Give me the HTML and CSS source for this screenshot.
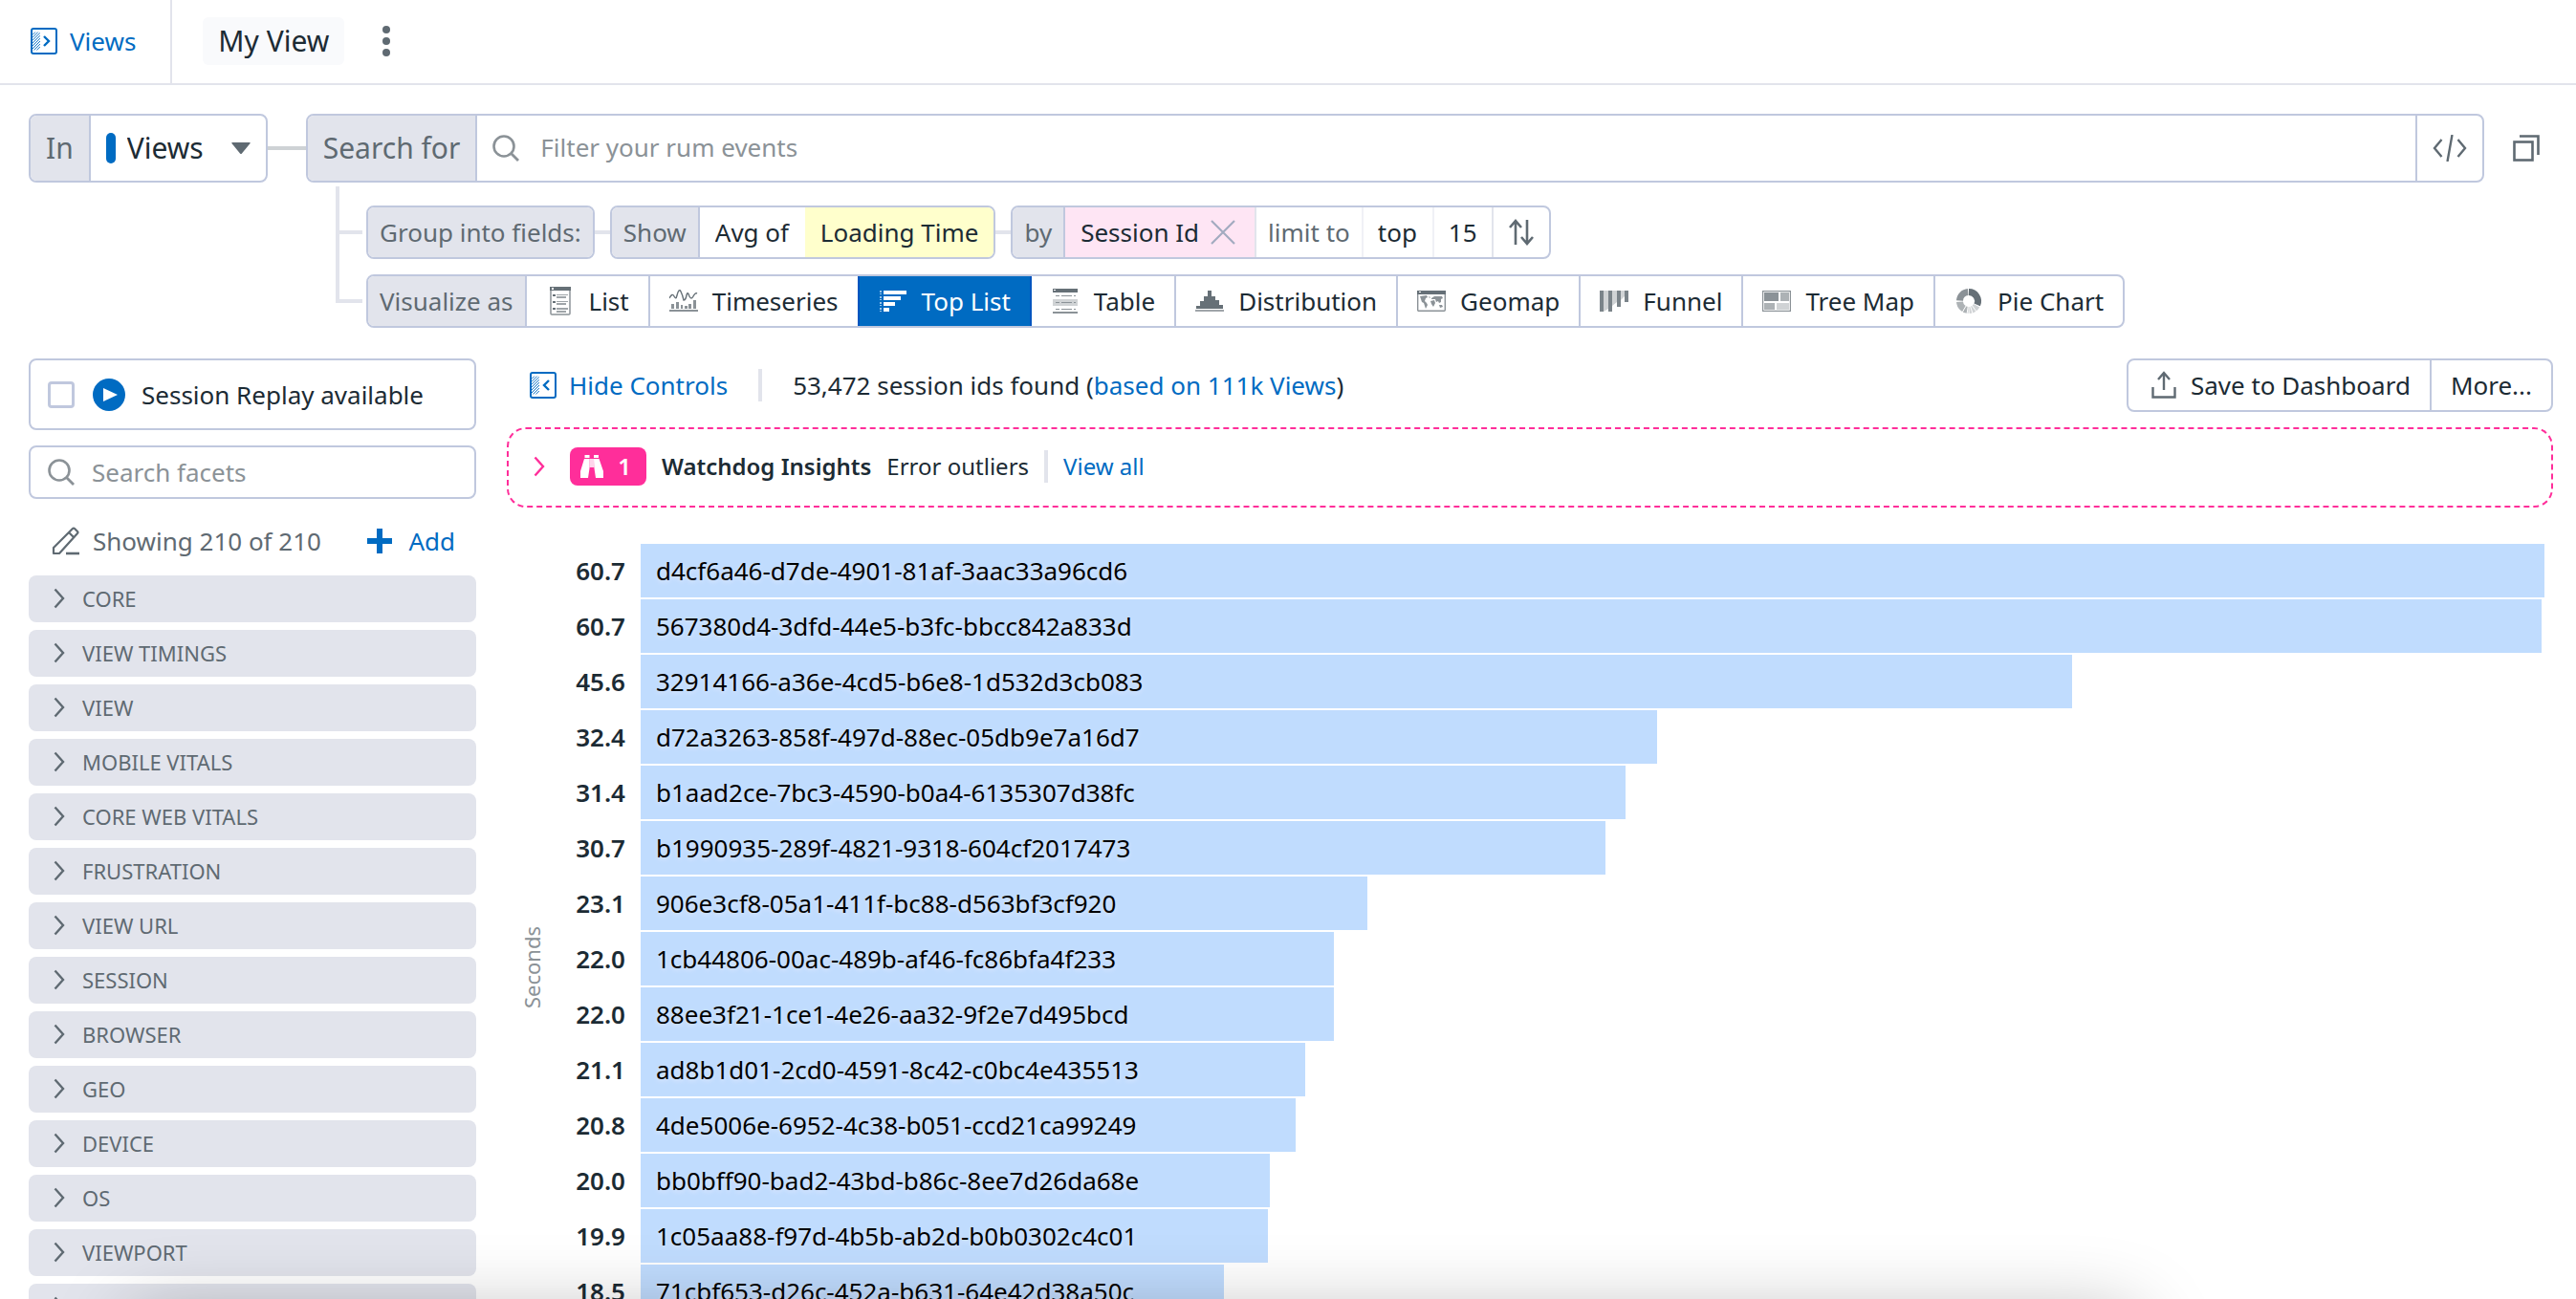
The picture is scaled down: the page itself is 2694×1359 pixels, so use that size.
FILE: index.html
```html
<!DOCTYPE html>
<html lang="en">
<head>
<meta charset="utf-8">
<meta name="viewport" content="width=device-width, initial-scale=1">
<title>My View</title>
<link rel="stylesheet" href="styles.css">
</head>
<body>
<svg class="defs" aria-hidden="true">
  <symbol id="hatch" viewBox="0 0 11 26"><path d="M0 4 4 0M0 8 8 0M0 12 11 1M0 16 11 5M0 20 11 9M0 24 11 13M2 26 11 17M6 26 11 21" fill="none" stroke="currentColor" stroke-width="1.3"/></symbol>
  <symbol id="search" viewBox="0 0 28 28"><circle cx="12" cy="12" r="10.5" fill="none" stroke="currentColor" stroke-width="2.6"/><path d="m19.5 19.5 7.5 7.5" stroke="currentColor" stroke-width="2.8"/></symbol>
  <symbol id="chevron" viewBox="0 0 12 22"><path d="m1.5 1.5 8.5 9.5-8.5 9.5" fill="none" stroke="currentColor" stroke-width="2.4"/></symbol>
</svg>

<header class="topbar">
  <a class="views-link" href="#">
    <svg class="icon-28" viewBox="0 0 28 28"><rect x="1" y="1" width="26" height="26" rx="2" fill="none" stroke="currentColor" stroke-width="2"/><use href="#hatch" x="2" y="1" width="8" height="26"/><path d="m14 9 5 5-5 5" fill="none" stroke="currentColor" stroke-width="2.4"/></svg>
    Views
  </a>
  <h1 class="view-name">My View</h1>
  <button class="kebab" type="button" aria-label="View options">
    <svg width="8" height="32" viewBox="0 0 8 32"><circle cx="4" cy="4" r="4"/><circle cx="4" cy="16" r="4"/><circle cx="4" cy="28" r="4"/></svg>
  </button>
</header>

<section class="query">
  <div class="query-row">
    <div class="box box-large source">
      <label class="tag" for="source">In</label>
      <span class="source-mark"></span>
      <select id="source" class="pick source-pick"><option>Views</option></select>
      <svg class="caret" width="20" height="12" viewBox="0 0 20 12"><path d="M1 0h18q1 0 .6 1L11 11.4q-1 1-2 0L.4 1Q0 0 1 0z"/></svg>
    </div>
    <span class="link-line"></span>
    <div class="box box-large search-box">
      <label class="tag" for="filter">Search for</label>
      <svg class="icon-28 search-icon"><use href="#search"/></svg>
      <input id="filter" class="text-input" type="text" placeholder="Filter your rum events">
      <button class="code-button" type="button" aria-label="Edit as code">
        <svg width="36" height="28" viewBox="0 0 36 28" fill="none" stroke="currentColor" stroke-width="2.4"><path d="M9.500 5 2 14l7.500 9M26.500 5 34 14l-7.500 9M20.500 0l-5 28"/></svg>
      </button>
    </div>
    <button class="copy-button" type="button" aria-label="Copy query">
      <svg class="icon-28" viewBox="0 0 28 28" fill="none" stroke="currentColor" stroke-width="2.6"><rect x="1.500" y="7.500" width="19" height="19"/><path d="M7 1.500h19.500V21"/></svg>
    </button>
  </div>

  <ul class="tree">
    <li class="branch">
      <span class="box"><span class="tag">Group into fields:</span></span>
      <span class="box-link"></span>
      <div class="box">
        <label class="tag" for="agg">Show</label>
        <select id="agg" class="pick"><option>Avg of</option></select>
        <button class="chip measure" type="button">Loading Time</button>
      </div>
      <span class="box-link"></span>
      <div class="box">
        <span class="tag">by</span>
        <button class="chip facet-chip" type="button">Session Id
          <svg width="26" height="26" viewBox="0 0 26 26" fill="none" stroke="currentColor" stroke-width="2.200"><path d="m1 1 24 24M25 1 1 25"/></svg>
        </button>
        <span class="cell hint">limit to</span>
        <select class="pick cell" aria-label="Order"><option>top</option></select>
        <select class="pick cell" aria-label="Limit"><option>15</option></select>
        <button class="chip sort" type="button" aria-label="Sort">
          <svg width="26" height="28" viewBox="0 0 26 28" fill="none" stroke="currentColor" stroke-width="2.600"><path d="M7 27V3M1 9l6-7 6 7M19 1v24M13 19l6 7 6-7"/></svg>
        </button>
      </div>
    </li>
    <li class="branch">
      <div class="box viz">
        <span class="tag">Visualize as</span>
        <button type="button"><svg class="icon-30" viewBox="0 0 30 30"><rect x="5" y="1" width="20" height="28" rx="1" fill="#fff" stroke="#8b9297" stroke-width="1.500"/><path d="M4 0h22v4H4z" fill="#667077"/><path d="M6 1h2v2H6z" fill="#fff"/><path d="M7 8h3v2H7zM7 15h3v2H7zM7 22h3v2H7z" fill="#667077"/><path d="M11 8h12v1H11zM11 10h10v2H11zM11 15h12v1H11zM11 17h10v2H11zM11 22h12v2H11zM11 25h10v2H11z" fill="#9fa5a9"/></svg>List</button>
        <button type="button"><svg class="icon-30" viewBox="0 0 30 30"><path d="M0 12Q3 6 5 10T8 9Q10 1 12 5T15 14Q17 14 18 9T21 10Q23 14 25 10T29 7" fill="none" stroke="#667077" stroke-width="1.400"/><path d="M2 18h3v5H2zM7 16h3v7H7zM12 19h2v4h-2zM16 20h3v3h-3zM20 18h3v5h-3zM25 14h3v9h-3zM0 24h30v2H0z" fill="#8b9297"/></svg>Timeseries</button>
        <button type="button" class="active"><svg class="icon-30" viewBox="0 0 30 30" fill="#fff"><path d="M5 4h24v4H5zM5 10h18v4H5zM5 16h12v4H5zM5 22h6v4H5z"/><path d="M1 4h2v2H1zM1 10h2v2H1zM1 16h2v2H1zM1 22h2v2H1zM1 7h2v1H1zM1 13h2v1H1zM1 19h2v1H1zM1 25h2v1H1z" opacity=".6"/></svg>Top List</button>
        <button type="button"><svg class="icon-30" viewBox="0 0 30 30"><path d="M2 2h26v4H2z" fill="#667077"/><path d="M3 3h2v1H3z" fill="#fff"/><path d="M2 13h26v7H2z" fill="#d0d3d5"/><path d="M5 9h4v1H5zM11 9h11v1H11zM24 9h2v1h-2zM5 16h4v1H5zM11 16h11v1H11zM24 16h2v1h-2zM5 23h4v1H5zM11 23h11v1H11zM24 23h2v1h-2zM2 26h26v2H2z" fill="#8b9297"/></svg>Table</button>
        <button type="button"><svg class="icon-30" viewBox="0 0 30 30"><path d="M1 23v-3h4v-5h4v-5h4V4h4v6h4v4h4v5h4v4z" fill="#667077"/><path d="M0 24h30v2H0z" fill="#9fa5a9"/></svg>Distribution</button>
        <button type="button"><svg class="icon-30" viewBox="0 0 30 30"><rect x=".7" y="4.700" width="28.600" height="20.600" rx="1" fill="#fff" stroke="#8b9297" stroke-width="1.400"/><path d="M0 4h30v4H0z" fill="#667077"/><path d="M2 5h2v1H2z" fill="#fff"/><path d="M3 10l7-1 1 2-2 1-1 3 2 2 1 2-2 4-1-3-1-3-2-1-1-3zM12 10l2 1-1 1zM14 15l4-1 1 3-2 4-2-3zM15 12l3-2 8 0 1 2-2 1v3l-2 1-1-2-2 1-1-3-4 0zM23 19h3l1 2-3 1z" fill="#8b9297"/></svg>Geomap</button>
        <button type="button"><svg class="icon-30" viewBox="0 0 30 30"><path d="M4 4h5v19l-5 3zM13 4h5v12l-5 4zM22 4h4v6l-4 4z" fill="#d0d3d5"/><path d="M0 4h4v22H0zM9 4h4v22H9zM18 4h4v17h-4zM26 4h4v12h-4z" fill="#7b848a"/></svg>Funnel</button>
        <button type="button"><svg class="icon-30" viewBox="0 0 30 30"><rect x=".6" y="4.600" width="28.800" height="20.800" fill="#fff" stroke="#8b9297" stroke-width="1.200"/><path d="M2 6h15v9H2z" fill="#8b9297"/><path d="M19 6h9v9h-9zM2 17h11v7H2z" fill="#adb2b5"/><path d="M15 17h13v7H15z" fill="#d0d3d5"/></svg>Tree Map</button>
        <button type="button"><svg class="icon-30" viewBox="0 0 30 30" fill="none" stroke-width="7"><path d="M15 5.500A9.500 9.500 0 0 1 23.700 18.900" stroke="#667077"/><path d="M23.200 19.700A9.500 9.500 0 0 1 15.500 24.500" stroke="#d0d3d5"/><path d="M14.500 24.500A9.500 9.500 0 0 1 5.500 15.700" stroke="#adb2b5"/><path d="M5.500 14.500A9.500 9.500 0 0 1 14.200 5.500" stroke="#8b9297"/><path d="m15 15-7 12M15 15l-2 14M15 15l4 13M15 15l8 11" stroke="#fff" stroke-width="1"/></svg>Pie Chart</button>
      </div>
    </li>
  </ul>
</section>

<div class="workspace">
  <aside class="sidebar">
    <label class="replay">
      <input type="checkbox">
      <svg width="34" height="34" viewBox="0 0 34 34"><circle cx="17" cy="17" r="17" fill="#006bc2"/><path d="m11 10 15 7-15 7z" fill="#fff"/></svg>
      Session Replay available
    </label>
    <div class="facet-search">
      <svg class="icon-28 search-icon"><use href="#search"/></svg>
      <input class="text-input" type="text" placeholder="Search facets" aria-label="Search facets">
    </div>
    <div class="facet-count">
      <svg width="30" height="30" viewBox="0 0 30 30" fill="none" stroke="currentColor" stroke-width="2.200" stroke-linejoin="round"><path d="M2 28v-6L22 2q1-1 2 0l3 3q1 1 0 2L8 28zM18 6l6 6"/><path d="M15 28h14" stroke-width="2.600"/></svg>
      <span>Showing 210 of 210</span>
      <button class="add" type="button"><svg width="28" height="28" viewBox="0 0 28 28"><path d="M11 1h6v10h10v6H17v10h-6V17H1v-6h10z" fill="currentColor"/></svg>Add</button>
    </div>
    <ul class="facets">
      <li><button type="button"><svg width="12" height="22"><use href="#chevron"/></svg>CORE</button></li>
      <li><button type="button"><svg width="12" height="22"><use href="#chevron"/></svg>VIEW TIMINGS</button></li>
      <li><button type="button"><svg width="12" height="22"><use href="#chevron"/></svg>VIEW</button></li>
      <li><button type="button"><svg width="12" height="22"><use href="#chevron"/></svg>MOBILE VITALS</button></li>
      <li><button type="button"><svg width="12" height="22"><use href="#chevron"/></svg>CORE WEB VITALS</button></li>
      <li><button type="button"><svg width="12" height="22"><use href="#chevron"/></svg>FRUSTRATION</button></li>
      <li><button type="button"><svg width="12" height="22"><use href="#chevron"/></svg>VIEW URL</button></li>
      <li><button type="button"><svg width="12" height="22"><use href="#chevron"/></svg>SESSION</button></li>
      <li><button type="button"><svg width="12" height="22"><use href="#chevron"/></svg>BROWSER</button></li>
      <li><button type="button"><svg width="12" height="22"><use href="#chevron"/></svg>GEO</button></li>
      <li><button type="button"><svg width="12" height="22"><use href="#chevron"/></svg>DEVICE</button></li>
      <li><button type="button"><svg width="12" height="22"><use href="#chevron"/></svg>OS</button></li>
      <li><button type="button"><svg width="12" height="22"><use href="#chevron"/></svg>VIEWPORT</button></li>
      <li><button type="button" aria-label="More facets"><svg width="12" height="22"><use href="#chevron"/></svg></button></li>
    </ul>
  </aside>

  <main class="results">
    <div class="toolbar">
      <button class="hide-controls" type="button">
        <svg class="icon-28" viewBox="0 0 28 28"><rect x="1" y="1" width="26" height="26" rx="2" fill="none" stroke="currentColor" stroke-width="2"/><use href="#hatch" x="2" y="1" width="8" height="26"/><path d="m20 9-5 5 5 5" fill="none" stroke="currentColor" stroke-width="2.400"/></svg>
        Hide Controls
      </button>
      <span class="rule"></span>
      <p class="found">53,472 session ids found (<a href="#">based on 111k Views</a>)</p>
      <div class="actions">
        <button class="save" type="button"><svg width="26" height="30" viewBox="0 0 26 30" fill="none" stroke="currentColor" stroke-width="2.400"><path d="M1.500 17v10.500h23V17M13 20V3M7 9l6-7 6 7"/></svg>Save to Dashboard</button>
        <button type="button">More...</button>
      </div>
    </div>

    <section class="insights">
      <button class="expand" type="button" aria-label="Expand insights"><svg width="12" height="22"><use href="#chevron"/></svg></button>
      <span class="badge"><svg width="26" height="24" viewBox="0 0 26 24" fill="#fff"><path d="M5.500 0h5v3h-5zM15 0h5v3h-5zM5 4h5.500v10L9 24H1v-7zM15 4h5.500L25 17v7h-8l-1.500-10z"/><path d="M10.500 4h5v9h-5z" opacity=".8"/></svg>1</span>
      <strong>Watchdog Insights</strong>
      <span>Error outliers</span>
      <span class="rule"></span>
      <a href="#">View all</a>
    </section>

    <figure class="chart">
      <figcaption>Seconds</figcaption>
      <ol class="bars">
        <li><b>60.7</b><div class="track"><span class="bar" style="width:100%"></span><span class="name">d4cf6a46-d7de-4901-81af-3aac33a96cd6</span></div></li>
        <li><b>60.7</b><div class="track"><span class="bar" style="width:99.850%"></span><span class="name">567380d4-3dfd-44e5-b3fc-bbcc842a833d</span></div></li>
        <li><b>45.6</b><div class="track"><span class="bar" style="width:75.200%"></span><span class="name">32914166-a36e-4cd5-b6e8-1d532d3cb083</span></div></li>
        <li><b>32.4</b><div class="track"><span class="bar" style="width:53.400%"></span><span class="name">d72a3263-858f-497d-88ec-05db9e7a16d7</span></div></li>
        <li><b>31.4</b><div class="track"><span class="bar" style="width:51.750%"></span><span class="name">b1aad2ce-7bc3-4590-b0a4-6135307d38fc</span></div></li>
        <li><b>30.7</b><div class="track"><span class="bar" style="width:50.700%"></span><span class="name">b1990935-289f-4821-9318-604cf2017473</span></div></li>
        <li><b>23.1</b><div class="track"><span class="bar" style="width:38.150%"></span><span class="name">906e3cf8-05a1-411f-bc88-d563bf3cf920</span></div></li>
        <li><b>22.0</b><div class="track"><span class="bar" style="width:36.400%"></span><span class="name">1cb44806-00ac-489b-af46-fc86bfa4f233</span></div></li>
        <li><b>22.0</b><div class="track"><span class="bar" style="width:36.400%"></span><span class="name">88ee3f21-1ce1-4e26-aa32-9f2e7d495bcd</span></div></li>
        <li><b>21.1</b><div class="track"><span class="bar" style="width:34.900%"></span><span class="name">ad8b1d01-2cd0-4591-8c42-c0bc4e435513</span></div></li>
        <li><b>20.8</b><div class="track"><span class="bar" style="width:34.400%"></span><span class="name">4de5006e-6952-4c38-b051-ccd21ca99249</span></div></li>
        <li><b>20.0</b><div class="track"><span class="bar" style="width:33.050%"></span><span class="name">bb0bff90-bad2-43bd-b86c-8ee7d26da68e</span></div></li>
        <li><b>19.9</b><div class="track"><span class="bar" style="width:32.950%"></span><span class="name">1c05aa88-f97d-4b5b-ab2d-b0b0302c4c01</span></div></li>
        <li><b>18.5</b><div class="track"><span class="bar" style="width:30.650%"></span><span class="name">71cbf653-d26c-452a-b631-64e42d38a50c</span></div></li>
      </ol>
    </figure>
  </main>
</div>
<div class="drawer-shadow"></div>
</body>
</html>
```

FILE: styles.css
```css
:root {
  --ink: #1c2b34;
  --muted: #5f6a72;
  --faint: #8b9297;
  --blue: #006bc2;
  --line: #c0c8de;
  --fill: #e2e4ec;
  --pink: #ff2e9a;
}

* { box-sizing: border-box; }

body {
  margin: 0;
  height: 100vh;
  overflow: hidden;
  background: #fff;
  color: var(--ink);
  font: 26px/36px "Noto Sans", sans-serif;
}

button, input, select {
  margin: 0;
  padding: 0;
  border: 0;
  background: none;
  color: inherit;
  font: inherit;
}

button { display: flex; align-items: center; white-space: nowrap; }
a { color: var(--blue); text-decoration: none; }
ul, ol { margin: 0; padding: 0; list-style: none; }
svg { flex: none; }

.defs { position: absolute; width: 0; height: 0; }
.icon-28 { width: 28px; height: 28px; }
.icon-30 { width: 30px; height: 30px; }

/* Top bar */
.topbar {
  display: flex;
  align-items: center;
  height: 89px;
  border-bottom: 2px solid var(--fill);
}

.views-link {
  display: flex;
  align-items: center;
  align-self: stretch;
  gap: 13px;
  padding: 0 36px 2px 32px;
  border-right: 2px solid var(--fill);
}

.view-name {
  margin: 0 40px 2px 32px;
  padding: 0 16px;
  border-radius: 6px;
  background: #f9fafc;
  font-size: 30px;
  font-weight: 400;
  line-height: 50px;
}

.kebab { margin-bottom: 2px; color: var(--muted); fill: currentColor; }

/* Query builder */
.query { padding: 30px 24px 0 30px; }
.query-row { display: flex; align-items: center; }

.box {
  display: flex;
  align-items: stretch;
  height: 56px;
  border: 2px solid var(--line);
  border-radius: 8px;
  overflow: hidden;
  white-space: nowrap;
}

.box-large { height: 72px; font-size: 30px; }

.tag {
  display: flex;
  align-items: center;
  padding: 0 12px;
  background: var(--fill);
  color: var(--muted);
}

.box-large .tag { padding: 0 16px; }
.tag:not(:last-child) { border-right: 2px solid var(--line); }
.pick { appearance: none; padding: 0 16px; }

.source { align-items: center; padding-right: 16px; }
.source .tag { align-self: stretch; }
.source-mark { width: 10px; height: 32px; margin-left: 16px; border-radius: 5px; background: var(--blue); }
.source-pick { padding: 0 28px 0 12px; }
.caret { fill: var(--muted); }
.link-line { width: 40px; height: 4px; background: #ced2d5; }

.search-box { flex: 1; }
.search-icon { align-self: center; color: var(--faint); }
.search-box .search-icon { margin: 0 22px 0 16px; }
.text-input { flex: 1; min-width: 0; outline: 0; font-size: 26px; }
.search-box .text-input { padding-bottom: 2px; }
.text-input::placeholder { color: var(--faint); opacity: 1; }
.code-button { padding: 0 16px; border-left: 2px solid var(--line); color: var(--muted); }
.copy-button { justify-content: center; width: 56px; height: 56px; margin-left: 16px; color: var(--muted); }

.tree {
  position: relative;
  display: flex;
  flex-direction: column;
  gap: 16px;
  margin: 4px 0 0 321px;
  padding-top: 20px;
}

.tree::before {
  content: "";
  position: absolute;
  inset: 0 auto 26px 0;
  width: 4px;
  background: var(--fill);
}

.branch { display: flex; align-items: center; }
.branch::before { content: ""; width: 28px; height: 4px; margin-right: 4px; background: var(--fill); }
.box-link { width: 16px; height: 4px; background: var(--fill); }

.chip { padding: 0 16px; }
.measure { background: #ffffcc; }
.facet-chip { gap: 12px; padding-right: 20px; background: #fee5f4; }
.facet-chip svg { color: #a3abc0; }
.cell { display: flex; align-items: center; padding: 0 15px; border-left: 2px solid #f0f1f6; }
.hint { padding: 0 12px; color: var(--muted); border-color: var(--fill); }
.sort { border-left: 2px solid var(--fill); color: var(--muted); }

.viz button { gap: 15px; padding: 0 20px; border-right: 2px solid var(--line); }
.viz button:last-child { border-right: 0; }
.viz .active { margin: -2px 0 -2px -2px; border: 2px solid #0055bf; background: var(--blue); color: #fff; }

/* Workspace */
.workspace {
  display: grid;
  grid-template-columns: 468px minmax(0, 1fr);
  gap: 32px;
  padding: 32px 24px 0 30px;
}

.replay {
  display: flex;
  align-items: center;
  height: 75px;
  padding: 0 18px;
  border: 2px solid var(--line);
  border-radius: 8px;
}

.replay input {
  appearance: none;
  width: 28px;
  height: 28px;
  border: 3px solid var(--line);
  border-radius: 4px;
}

.replay svg { margin: 0 17px 0 19px; }

.facet-search {
  display: flex;
  height: 56px;
  margin-top: 16px;
  padding: 0 18px;
  gap: 18px;
  border: 2px solid var(--line);
  border-radius: 8px;
}

.facet-count {
  display: flex;
  align-items: center;
  gap: 13px;
  padding: 26px 22px 18px 24px;
  color: var(--muted);
}

.add { gap: 16px; margin-left: auto; color: var(--blue); }

.facets { display: grid; gap: 8px; }
.facets button {
  gap: 18px;
  width: 100%;
  height: 49px;
  padding: 0 26px 2px;
  border-radius: 8px;
  background: var(--fill);
  color: var(--muted);
  font-size: 22px;
}

/* Results */
.toolbar { display: flex; align-items: center; height: 56px; padding-left: 24px; }
.hide-controls { gap: 13px; color: var(--blue); }
.rule { width: 4px; height: 34px; background: var(--fill); }
.toolbar .rule { margin: 0 32px; }
.found { margin: 0; }

.actions {
  display: flex;
  align-self: stretch;
  margin-left: auto;
  border: 2px solid var(--line);
  border-radius: 8px;
}

.actions button { gap: 15px; padding: 0 20px; }
.actions .save { padding-left: 24px; }
.actions svg { color: var(--muted); }
.actions button + button { border-left: 2px solid var(--line); }

.insights {
  display: flex;
  align-items: center;
  gap: 16px;
  height: 84px;
  margin-top: 16px;
  padding: 0 26px 2px;
  border: 2px dashed var(--pink);
  border-radius: 20px;
  font-size: 24px;
}

.insights strong { font-weight: 600; }
.expand { margin-right: 10px; color: var(--pink); }

.badge {
  display: flex;
  align-items: center;
  justify-content: space-between;
  width: 80px;
  height: 40px;
  padding: 0 16px 0 10px;
  border-radius: 8px;
  background: var(--pink);
  color: #fff;
  font-weight: 600;
}

.chart { display: flex; margin: 38px 9px 0 0; }

.chart figcaption {
  width: 60px;
  height: 886px;
  padding-right: 12px;
  color: var(--faint);
  font-size: 22px;
  line-height: 28px;
  text-align: center;
  writing-mode: vertical-rl;
  transform: rotate(180deg);
}

.bars { flex: 1; display: grid; gap: 2px; align-content: start; }
.bars li { display: grid; grid-template-columns: 64px 1fr; column-gap: 16px; height: 56px; line-height: 56px; }
.bars b { font-weight: 600; text-align: right; }
.track { display: grid; }
.track > * { grid-area: 1 / 1; }
.bar { background: #c0dcfe; }
.name { padding-left: 16px; color: #000; text-shadow: 0 2px 4px #dbe6ff; }

/* Shadow of the drawer tucked under the window's lower edge */
.drawer-shadow {
  position: fixed;
  top: calc(100% + 16px);
  left: 5%;
  right: 17%;
  height: 200px;
  border-radius: 20px;
  box-shadow: 0 0 80px rgba(0, 0, 0, 0.28);
  pointer-events: none;
}
```
